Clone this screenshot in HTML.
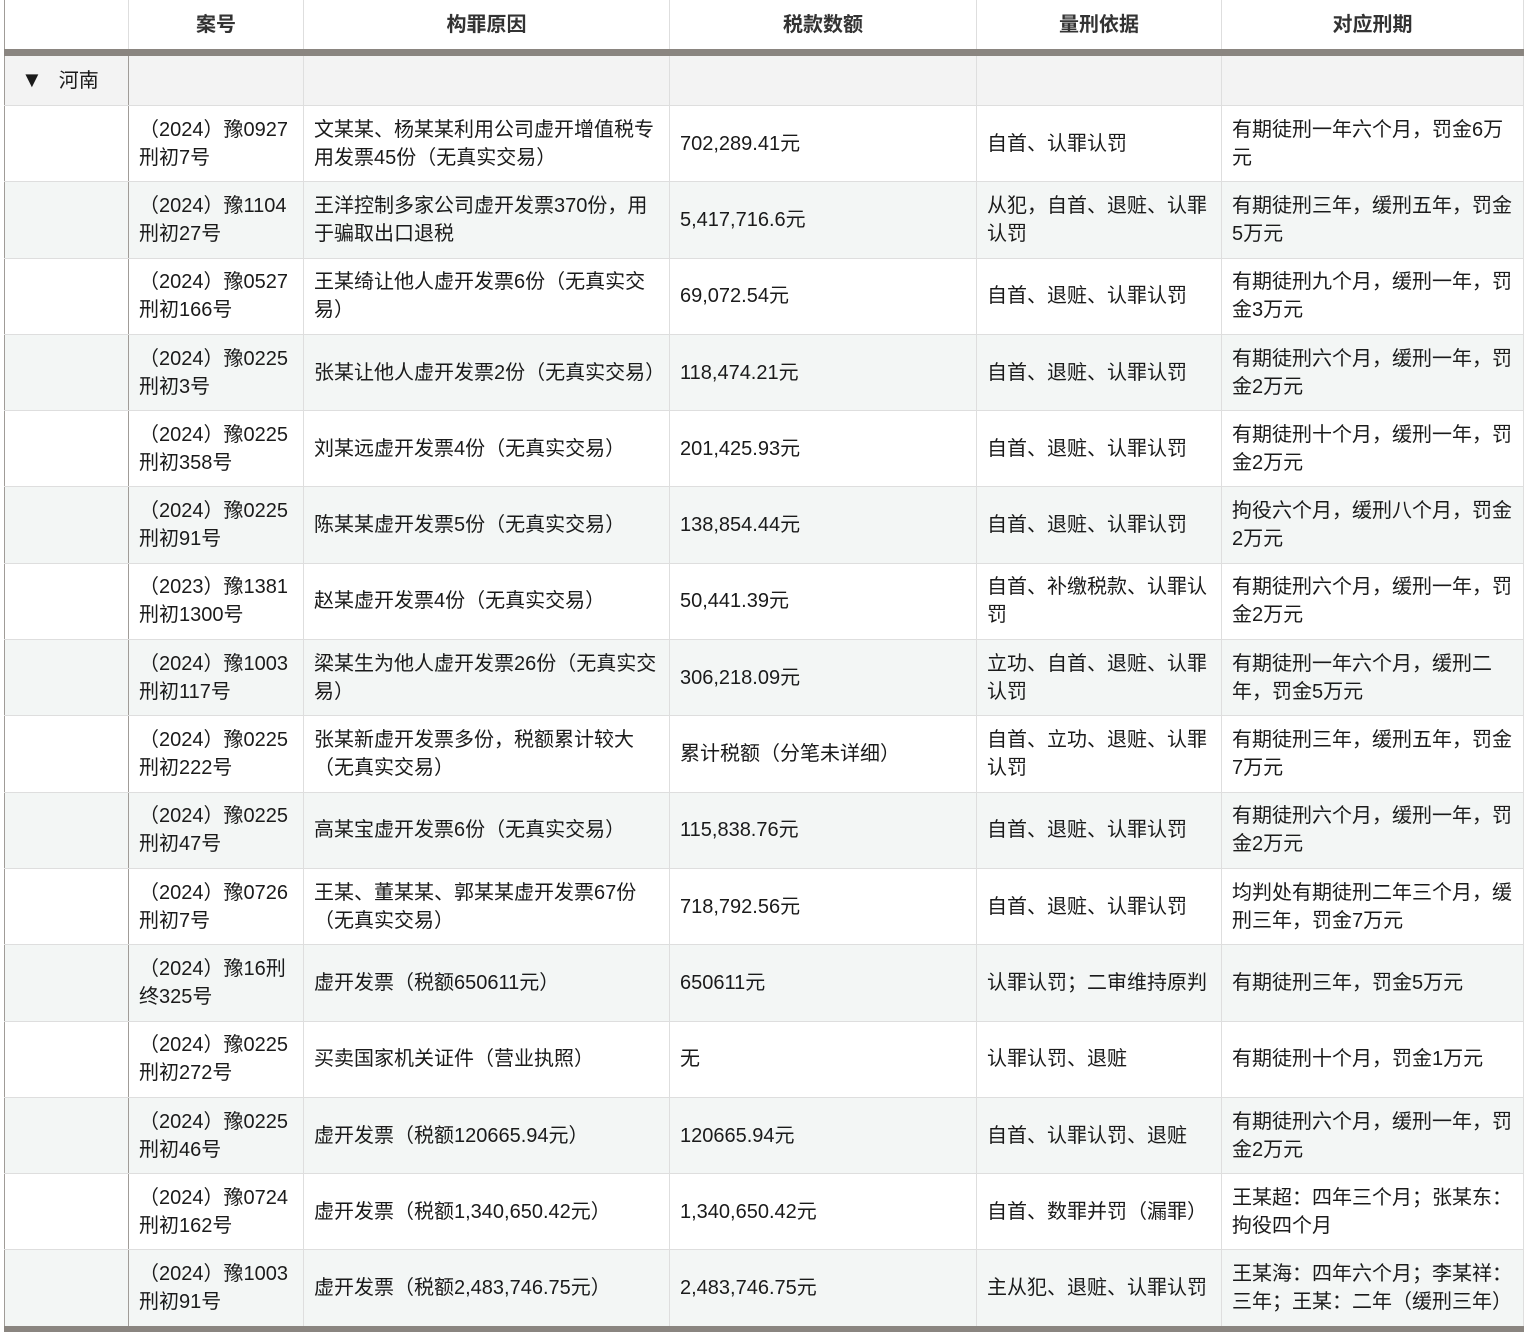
<!DOCTYPE html>
<html><head><meta charset="utf-8"><style>
html,body{margin:0;padding:0;background:#fff;}
body{width:1526px;height:1334px;overflow:hidden;font-family:"Liberation Sans","Noto Sans CJK SC",sans-serif;color:#1a1a1a;}
table{position:absolute;left:4px;top:0;width:1519px;border-collapse:collapse;table-layout:fixed;font-size:20px;line-height:28px;}
td,th{border:1px solid #dedede;padding:0 10px;vertical-align:middle;text-align:left;overflow:hidden;}
th{height:49px;font-weight:bold;text-align:center;color:#333;border-top:none;}
thead tr{border-bottom:7px solid #8a8580;}
tr.g td{background:#f3f3f3;height:49px;}
tbody tr.r td{height:75.3px;}
tbody tr.r:nth-child(odd) td{background:#f3f6f5;}
td.c1{border-right:1px solid #a09c98;}
td:first-child,th:first-child{border-left:1px solid #a09c98;}
tbody tr:last-child{border-bottom:6px solid #8a8580;}
.tri{font-size:22px;margin:0 16px 0 8px;}
</style></head><body>
<table>
<colgroup><col style="width:124px"><col style="width:175px"><col style="width:366px"><col style="width:307px"><col style="width:245px"><col style="width:302px"></colgroup>
<thead><tr><th></th><th>案号</th><th>构罪原因</th><th>税款数额</th><th>量刑依据</th><th>对应刑期</th></tr></thead>
<tbody>
<tr class="g"><td class="c1" style="white-space:nowrap;padding-left:8px"><span class="tri">▼</span>河南</td><td></td><td></td><td></td><td></td><td></td></tr>
<tr class="r"><td class="c1"></td><td>（2024）豫0927刑初7号</td><td>文某某、杨某某利用公司虚开增值税专用发票45份（无真实交易）</td><td>702,289.41元</td><td>自首、认罪认罚</td><td>有期徒刑一年六个月，罚金6万元</td></tr>
<tr class="r"><td class="c1"></td><td>（2024）豫1104刑初27号</td><td>王洋控制多家公司虚开发票370份，用于骗取出口退税</td><td>5,417,716.6元</td><td>从犯，自首、退赃、认罪认罚</td><td>有期徒刑三年，缓刑五年，罚金5万元</td></tr>
<tr class="r"><td class="c1"></td><td>（2024）豫0527刑初166号</td><td>王某绮让他人虚开发票6份（无真实交易）</td><td>69,072.54元</td><td>自首、退赃、认罪认罚</td><td>有期徒刑九个月，缓刑一年，罚金3万元</td></tr>
<tr class="r"><td class="c1"></td><td>（2024）豫0225刑初3号</td><td>张某让他人虚开发票2份（无真实交易）</td><td>118,474.21元</td><td>自首、退赃、认罪认罚</td><td>有期徒刑六个月，缓刑一年，罚金2万元</td></tr>
<tr class="r"><td class="c1"></td><td>（2024）豫0225刑初358号</td><td>刘某远虚开发票4份（无真实交易）</td><td>201,425.93元</td><td>自首、退赃、认罪认罚</td><td>有期徒刑十个月，缓刑一年，罚金2万元</td></tr>
<tr class="r"><td class="c1"></td><td>（2024）豫0225刑初91号</td><td>陈某某虚开发票5份（无真实交易）</td><td>138,854.44元</td><td>自首、退赃、认罪认罚</td><td>拘役六个月，缓刑八个月，罚金2万元</td></tr>
<tr class="r"><td class="c1"></td><td>（2023）豫1381刑初1300号</td><td>赵某虚开发票4份（无真实交易）</td><td>50,441.39元</td><td>自首、补缴税款、认罪认罚</td><td>有期徒刑六个月，缓刑一年，罚金2万元</td></tr>
<tr class="r"><td class="c1"></td><td>（2024）豫1003刑初117号</td><td>梁某生为他人虚开发票26份（无真实交易）</td><td>306,218.09元</td><td>立功、自首、退赃、认罪认罚</td><td>有期徒刑一年六个月，缓刑二年，罚金5万元</td></tr>
<tr class="r"><td class="c1"></td><td>（2024）豫0225刑初222号</td><td>张某新虚开发票多份，税额累计较大（无真实交易）</td><td>累计税额（分笔未详细）</td><td>自首、立功、退赃、认罪认罚</td><td>有期徒刑三年，缓刑五年，罚金7万元</td></tr>
<tr class="r"><td class="c1"></td><td>（2024）豫0225刑初47号</td><td>高某宝虚开发票6份（无真实交易）</td><td>115,838.76元</td><td>自首、退赃、认罪认罚</td><td>有期徒刑六个月，缓刑一年，罚金2万元</td></tr>
<tr class="r"><td class="c1"></td><td>（2024）豫0726刑初7号</td><td>王某、董某某、郭某某虚开发票67份（无真实交易）</td><td>718,792.56元</td><td>自首、退赃、认罪认罚</td><td>均判处有期徒刑二年三个月，缓刑三年，罚金7万元</td></tr>
<tr class="r"><td class="c1"></td><td>（2024）豫16刑终325号</td><td>虚开发票（税额650611元）</td><td>650611元</td><td>认罪认罚；二审维持原判</td><td>有期徒刑三年，罚金5万元</td></tr>
<tr class="r"><td class="c1"></td><td>（2024）豫0225刑初272号</td><td>买卖国家机关证件（营业执照）</td><td>无</td><td>认罪认罚、退赃</td><td>有期徒刑十个月，罚金1万元</td></tr>
<tr class="r"><td class="c1"></td><td>（2024）豫0225刑初46号</td><td>虚开发票（税额120665.94元）</td><td>120665.94元</td><td>自首、认罪认罚、退赃</td><td>有期徒刑六个月，缓刑一年，罚金2万元</td></tr>
<tr class="r"><td class="c1"></td><td>（2024）豫0724刑初162号</td><td>虚开发票（税额1,340,650.42元）</td><td>1,340,650.42元</td><td>自首、数罪并罚（漏罪）</td><td>王某超：四年三个月；张某东：拘役四个月</td></tr>
<tr class="r"><td class="c1"></td><td>（2024）豫1003刑初91号</td><td>虚开发票（税额2,483,746.75元）</td><td>2,483,746.75元</td><td>主从犯、退赃、认罪认罚</td><td>王某海：四年六个月；李某祥：三年；王某：二年（缓刑三年）</td></tr>
</tbody></table>
</body></html>
